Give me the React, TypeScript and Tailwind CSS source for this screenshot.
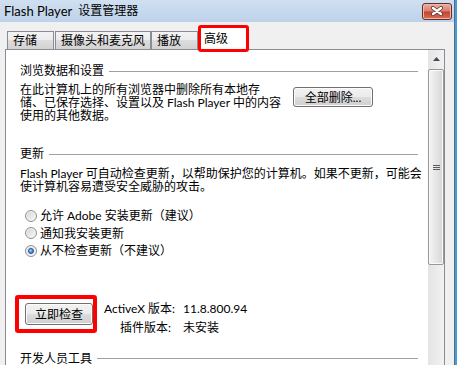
import React from "react";

const btn =
  "flex items-center justify-center rounded-[3px] border border-[#707070] bg-[linear-gradient(to_bottom,#f2f2f2_0%,#ebebeb_50%,#dddddd_50%,#cfcfcf_100%)] shadow-[inset_0_0_0_1px_#fcfcfc] text-[12px] text-black";

const tab =
  "flex h-[18px] items-center border-l border-t border-r border-[#898c95] bg-[linear-gradient(to_bottom,#f3f3f3_0%,#ebebeb_50%,#dddddd_50%,#d2d2d2_100%)] pl-[5px] text-[12px] leading-none text-black";

function SectionHeader({ title }: { title: string }) {
  return (
    <div className="flex h-[13px] items-center gap-[5px] leading-[13px]">
      <span className="whitespace-nowrap">{title}</span>
      <div className="mt-[1px] h-px flex-1 bg-[#a0a0a0]" />
    </div>
  );
}

function Radio({ checked }: { checked?: boolean }) {
  return (
    <span className="flex h-[12px] w-[12px] shrink-0 items-center justify-center rounded-full border border-[#8e8f8f] bg-[linear-gradient(135deg,#d2d2d2,#fbfbfb)] shadow-[inset_0_0_0_1px_#f6f6f6]">
      {checked ? (
        <span className="h-[6px] w-[6px] rounded-full border border-[#1b4f9c] bg-[radial-gradient(circle_at_35%_35%,#a8d8ff,#2c74d6_75%)]" />
      ) : null}
    </span>
  );
}

function RadioRow({ label, checked }: { label: React.ReactNode; checked?: boolean }) {
  return (
    <div className="flex h-[17.5px] items-center gap-[3px] pl-[5px]">
      <Radio checked={checked} />
      <span className="whitespace-nowrap">{label}</span>
    </div>
  );
}

function CloseButton() {
  return (
    <div className="flex h-[17px] w-[30px] items-center justify-center rounded-[3px] border border-[#6b2a22] bg-[linear-gradient(to_bottom,#eab0a3_0%,#d9806f_45%,#c5442f_55%,#d4715d_100%)] shadow-[inset_0_0_0_1px_#f0b8a8]">
      <svg width="14" height="10" viewBox="0 0 14 10">
        <path d="M3 2 L11 8 M11 2 L3 8" stroke="#5a3a35" strokeWidth="4" strokeLinecap="round" />
        <path d="M3 2 L11 8 M11 2 L3 8" stroke="#ffffff" strokeWidth="2.4" strokeLinecap="round" />
      </svg>
    </div>
  );
}

function Scrollbar() {
  return (
    <div className="flex w-[16px] shrink-0 flex-col bg-[linear-gradient(to_right,#e4e4e4,#f2f2f2)]">
      <div className="flex h-[17px] items-center justify-center">
        <svg width="7" height="4" viewBox="0 0 7 4">
          <path d="M0 4 L3.5 0 L7 4 Z" fill="#4a4a4a" />
        </svg>
      </div>
      <div className="mt-[2px] flex h-[196px] items-center justify-center rounded-[2px] border border-[#979797] bg-[linear-gradient(to_right,#f4f4f4,#e6e6e6_50%,#d6d6d6)] shadow-[inset_0_0_0_1px_#fafafa]">
        <svg width="7" height="7" viewBox="0 0 7 7">
          <path d="M0 1.5 H7 M0 3.5 H7 M0 5.5 H7" stroke="#5c5c5c" strokeWidth="1" />
        </svg>
      </div>
    </div>
  );
}

export default function App() {
  return (
    <div className="flex h-[365px] w-[465px] overflow-hidden bg-white font-['Lato','Noto_Sans_CJK_SC',sans-serif] text-black">
      <div className="flex w-[454px] shrink-0 flex-col bg-[#f0f0f0]">
        <div className="flex h-[22px] shrink-0 items-center justify-between bg-[linear-gradient(to_bottom,#d0e0f1,#bdd1e9)] pl-[4px] pr-[2px]">
          <div className="flex items-center gap-[6px] whitespace-nowrap text-[12px] leading-none">
            <span className="text-[13px]">Flash Player</span>
            <span>设置管理器</span>
          </div>
          <CloseButton />
        </div>

        <div className="relative z-10 mt-[5px] flex items-end pl-[7px]">
          <div className={`${tab} w-[47px]`}>存储</div>
          <div className={`${tab} ml-[1px] w-[96px]`}>摄像头和麦克风</div>
          <div className={`${tab} w-[47px]`}>播放</div>
          <div className="relative -mb-px ml-[1px] flex h-[23px] w-[49px] items-center bg-white pl-[5px] text-[12px] leading-none">
            高级
            <div className="absolute -bottom-[2px] -left-[1px] -right-[1px] -top-[2px] rounded-[3px] border-[3px] border-[#ff0000]" />
          </div>
        </div>

        <div className="ml-[5px] flex min-h-0 w-[440px] flex-1 border-l border-r border-t border-[#898c95] bg-white">
          <div className="flex min-w-0 flex-1 flex-col pl-[14px] pr-[10px] pt-[14px] text-[12px] leading-[13px]">
            <SectionHeader title="浏览数据和设置" />
            <div className="mt-[6px] flex items-start">
              <div className="w-[273px] shrink-0 whitespace-nowrap">
                <div>在此计算机上的所有浏览器中删除所有本地存</div>
                <div>储、已保存选择、设置以及 Flash Player 中的内容</div>
                <div>使用的其他数据。</div>
              </div>
              <button type="button" className={`${btn} mt-[4px] h-[20px] w-[80px]`}>
                全部删除...
              </button>
            </div>

            <div className="mt-[25px]">
              <SectionHeader title="更新" />
            </div>
            <div className="mt-[7px] whitespace-nowrap">
              <div>Flash Player 可自动检查更新，以帮助保护您的计算机。如果不更新，可能会</div>
              <div>使计算机容易遭受安全威胁的攻击。</div>
            </div>

            <div className="mt-[14px] flex flex-col">
              <RadioRow label="允许 Adobe 安装更新（建议）" />
              <RadioRow label="通知我安装更新" />
              <RadioRow label="从不检查更新（不建议）" checked />
            </div>

            <div className="mt-[39px] flex items-start">
              <div className="relative ml-[5px] mt-[4.5px]">
                <button type="button" className={`${btn} h-[22px] w-[68px]`}>
                  立即检查
                </button>
                <div className="absolute -bottom-[8px] -left-[10px] -right-[4px] -top-[8px] rounded-[3px] border-[4px] border-[#ff0000]" />
              </div>
              <div className="ml-[11px] grid grid-cols-[67px_auto] gap-x-[12px] whitespace-nowrap leading-[19px]">
                <div className="text-right">ActiveX 版本:</div>
                <div>11.8.800.94</div>
                <div className="text-right">插件版本:</div>
                <div>未安装</div>
              </div>
            </div>

            <div className="mt-[15px]">
              <SectionHeader title="开发人员工具" />
            </div>
          </div>
          <Scrollbar />
        </div>
      </div>
      <div className="w-px shrink-0 bg-[#5f6a74]" />
      <div className="w-[2px] shrink-0 bg-[#3f9fe0]" />
      <div className="flex-1 bg-white" />
    </div>
  );
}
